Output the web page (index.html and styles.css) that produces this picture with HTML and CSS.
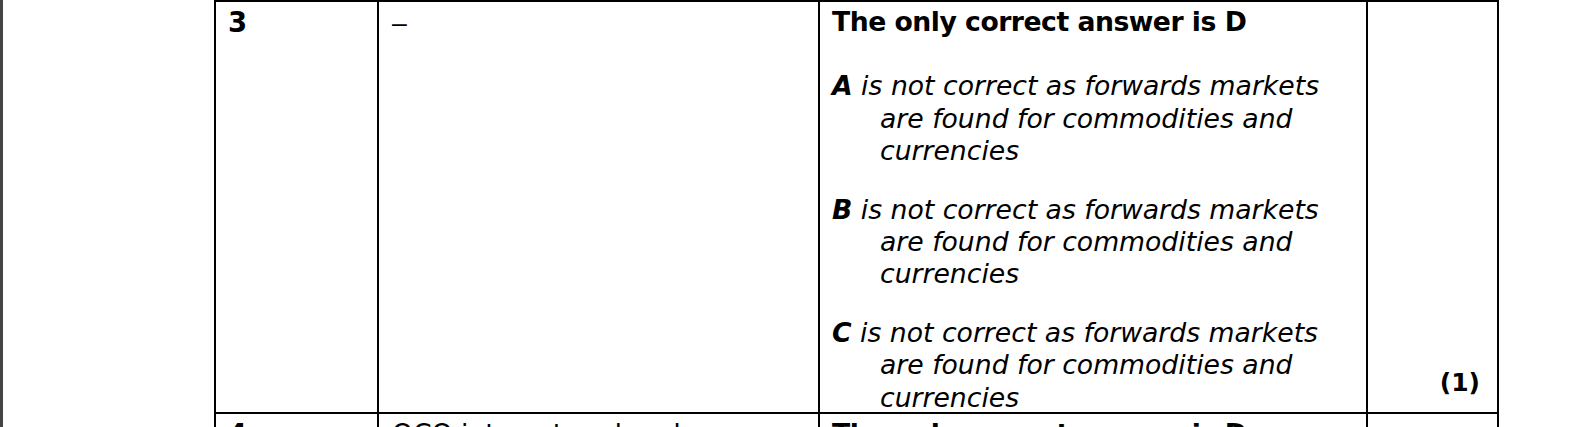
FILE: index.html
```html
<!DOCTYPE html>
<html lang="en">
<head>
<meta charset="utf-8">
<title>Mark scheme</title>
<link rel="stylesheet" href="styles.css">
</head>
<body>
<div class="page">
  <div class="edge"></div>
  <main class="sheet">
    <div class="table">
      <div class="cell c-num"><span class="num">3</span></div>
      <div class="cell c-key"><span class="dash">–</span></div>
      <div class="cell c-ans">
        <p class="head">The only correct answer is D</p>
        <p class="opt"><b>A</b> is not correct as forwards markets are found for commodities and currencies</p>
        <p class="opt"><b>B</b> is not correct as forwards markets are found for commodities and currencies</p>
        <p class="opt"><b>C</b> is not correct as forwards markets are found for commodities and currencies</p>
      </div>
      <div class="cell c-mark"><span class="mark">(1)</span></div>

      <div class="cell c-num"><span class="num">4</span></div>
      <div class="cell c-key"><span class="key">OCO interest and and</span></div>
      <div class="cell c-ans"><p class="head">The only correct answer is D</p></div>
      <div class="cell c-mark"></div>
    </div>
  </main>
</div>
</body>
</html>
```

FILE: styles.css
```css
html, body {
  margin: 0;
  padding: 0;
  background: #ffffff;
}

body {
  font-family: "DejaVu Sans", Verdana, sans-serif;
  font-size: 26.67px;
  line-height: 32.4px;
  color: #000000;
}

.page {
  display: flex;
  height: 427px;
  overflow: hidden;
}

.edge {
  width: 3px;
  flex: none;
  background: #454545;
}

.sheet {
  flex: 1;
  padding-left: 211px;
}

.table {
  display: grid;
  grid-template-columns: 161px 439px 546px 129px;
  grid-template-rows: 410px 60px;
  gap: 2px;
  padding: 2px;
  background: #000000;
  width: max-content;
}

.cell {
  background: #ffffff;
  padding-top: 4px;
}

.c-num {
  padding-left: 12px;
}

.num {
  font-weight: bold;
  font-size: 27.5px;
}

.c-key {
  padding-left: 13px;
}

.dash {
  font-family: "Liberation Sans", Arial, sans-serif;
  position: relative;
  top: 1px;
}

.c-ans {
  padding-left: 12px;
}

.head {
  margin: 0 0 32px 0;
  font-weight: bold;
  letter-spacing: -0.5px;
}

.opt {
  margin: 0 0 26px 0;
  font-style: italic;
  padding-left: 48px;
  text-indent: -48px;
}

.opt:last-child {
  margin-bottom: 0;
}

.opt b {
  font-weight: bold;
}

.c-mark {
  display: flex;
  flex-direction: column;
  justify-content: flex-end;
  align-items: flex-end;
  padding-right: 17px;
  padding-bottom: 14px;
}

.mark {
  font-weight: bold;
  font-size: 25px;
  line-height: 30px;
}
```
